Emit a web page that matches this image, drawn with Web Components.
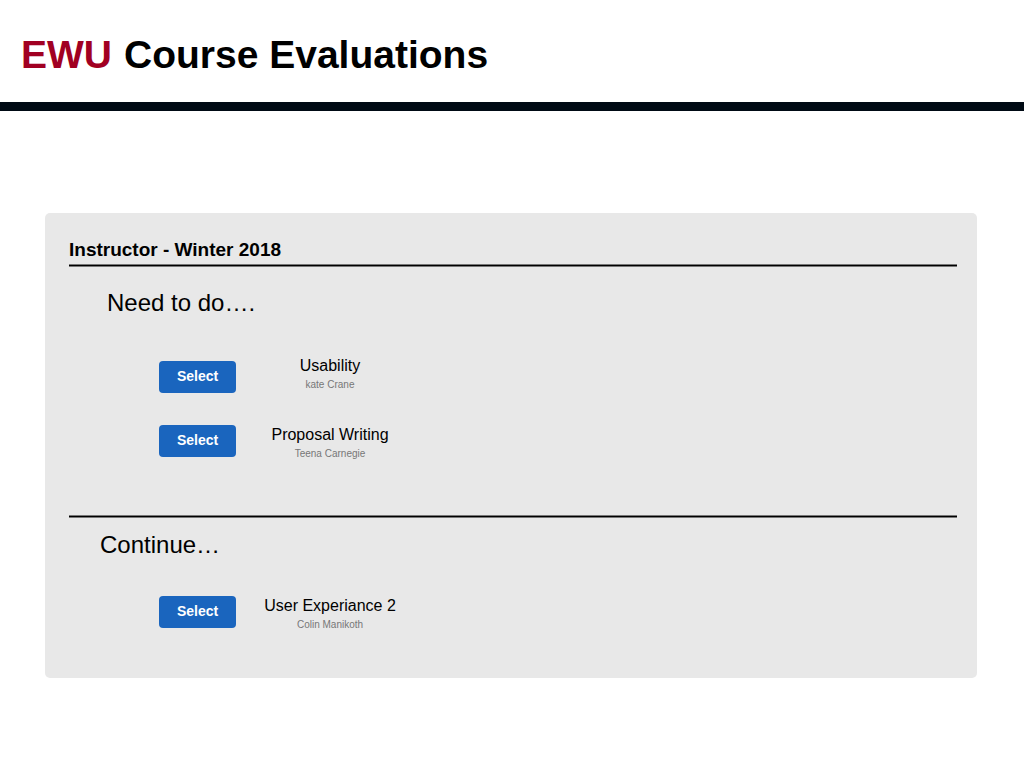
<!DOCTYPE html>
<html lang="en">
<head>
<meta charset="utf-8">
<meta name="viewport" content="width=device-width, initial-scale=1">
<title>EWU Course Evaluations</title>
<style>
  body { margin: 0; background: #fff; color: #000; font-family: "Liberation Sans", Arial, sans-serif; }
</style>
</head>
<body>
<site-header><span slot="brand">EWU</span> Course Evaluations</site-header>
<evaluation-panel>
  <span slot="heading">Instructor - Winter 2018</span>
  <evaluation-section>
    <span slot="title">Need to do….</span>
    <course-row align="end"><span slot="course">Usability</span><span slot="teacher">kate Crane</span></course-row>
    <course-row><span slot="course">Proposal Writing</span><span slot="teacher">Teena Carnegie</span></course-row>
  </evaluation-section>
  <evaluation-section divided>
    <span slot="title">Continue…</span>
    <course-row><span slot="course">User Experiance 2</span><span slot="teacher">Colin Manikoth</span></course-row>
  </evaluation-section>
</evaluation-panel>
<script>
  function define(name, markup) {
    const template = document.createElement('template');
    template.innerHTML = markup;
    customElements.define(name, class extends HTMLElement {
      constructor() {
        super();
        this.attachShadow({ mode: 'open' }).append(template.content.cloneNode(true));
      }
    });
  }

  define('site-header', `
    <style>
      :host { display: block; border-bottom: 9px solid #000a14; padding: 33px 20px 25px 21px; }
      h1 { display: flex; flex-wrap: wrap; gap: 12px; margin: 0; font-size: 39px; line-height: 44px; font-weight: 700; }
      ::slotted([slot="brand"]) { color: #a10022; }
    </style>
    <header><h1><slot name="brand"></slot><slot></slot></h1></header>`);

  define('rule-line', `
    <style>
      :host { display: block; height: 1px; background: #000; border: solid #777; border-width: 1px 0; }
    </style>`);

  define('evaluation-panel', `
    <style>
      :host { display: block; margin: 102px 47px 90px 45px; padding: 26px 20px 45px 24px; border-radius: 5px; background: #e8e8e8; }
      h2 { margin: 0 0 3px; font-size: 19px; line-height: 22px; font-weight: 700; }
    </style>
    <main>
      <h2><slot name="heading"></slot></h2>
      <rule-line></rule-line>
      <slot></slot>
    </main>`);

  define('evaluation-section', `
    <style>
      :host { display: block; padding-bottom: 53px; }
      :host([divided]) { padding-bottom: 0; }
      rule-line { display: none; }
      :host([divided]) rule-line { display: block; }
      h3 { margin: 0; padding: 22px 0 0 38px; font-size: 24px; line-height: 28px; font-weight: 400; }
      :host([divided]) h3 { padding: 13px 0 0 31px; }
      .rows { display: flex; flex-direction: column; gap: 32px; padding: 39px 0 0 90px; }
      :host([divided]) .rows { padding-top: 37px; }
    </style>
    <section>
      <rule-line></rule-line>
      <h3><slot name="title"></slot></h3>
      <div class="rows"><slot></slot></div>
    </section>`);

  define('course-row', `
    <style>
      :host { display: flex; align-items: flex-start; gap: 24px; }
      :host([align="end"]) { align-items: flex-end; }
      button { width: 77px; height: 32px; padding: 0 0 2px; border: 0; border-radius: 4px; background: #1a65be; color: #fff; font: 700 14px/30px "Liberation Sans", Arial, sans-serif; cursor: pointer; }
      .text { width: 140px; text-align: center; }
      .course { font-size: 16px; line-height: 20px; color: #000; }
      .teacher { font-size: 10px; line-height: 17px; color: #777; }
    </style>
    <button type="button" aria-describedby="course">Select</button>
    <div class="text" id="course">
      <div class="course"><slot name="course"></slot></div>
      <div class="teacher"><slot name="teacher"></slot></div>
    </div>`);
</script>
</body>
</html>
